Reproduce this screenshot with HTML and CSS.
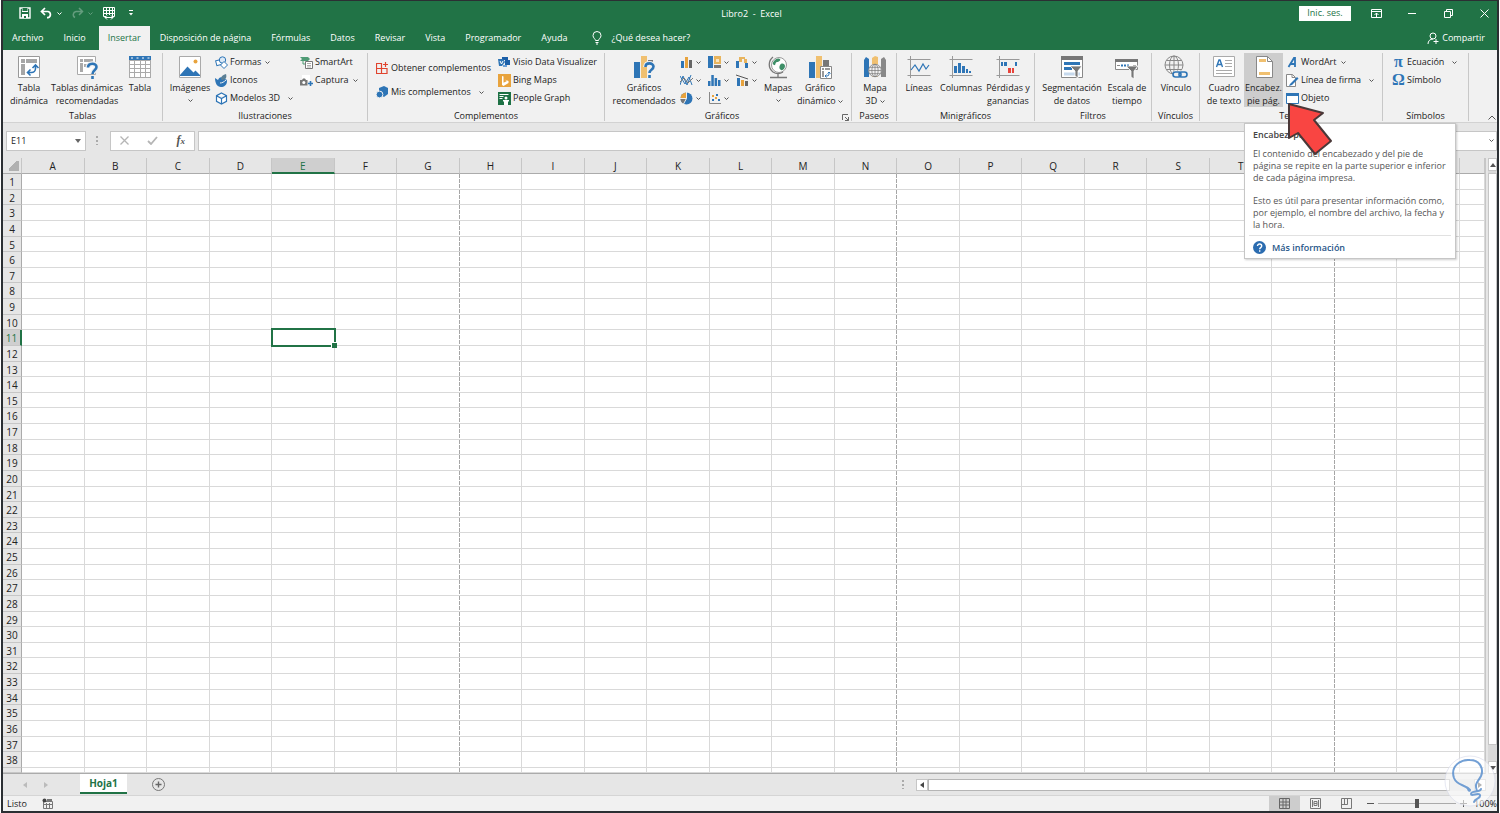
FILE: index.html
```
<!DOCTYPE html>
<html lang="es">
<head>
    <meta charset="UTF-8">
    <meta name="viewport" content="width=device-width, initial-scale=1.0">
    <title>Libro2 - Excel</title>
    <link rel="stylesheet" href="styles.css">
</head>
<body>
    <!-- shared glyphs -->
    <svg class="defs" aria-hidden="true">
        <symbol id="chev" viewBox="0 0 5 5"><path d="M0.5 1.5l2 2 2-2" fill="none" stroke="currentColor"/></symbol>
        <symbol id="globe" viewBox="0 0 20 20"><g fill="none" stroke="currentColor"><circle cx="10" cy="10" r="9"/><ellipse cx="10" cy="10" rx="4.5" ry="9"/><path d="M1 10h18M10 1v18M2.5 5.5h15M2.5 14.5h15"/></g></symbol>
    </svg>

    <div class="window">
        <header class="titlebar">
            <div class="quick">
                <button aria-label="Guardar"><svg width="12" height="12" viewBox="0 0 12 12"><path d="M1 1h10v10H1z" fill="none" stroke="#fff" stroke-width="1.4"/><path d="M3 1h6v4H3zM3 7h6v4H3z" fill="#fff"/><path d="M3.5 1h5v3h-5zM5 9h2v2H5z" fill="#217346"/></svg></button>
                <button class="undo" aria-label="Deshacer"><svg width="13" height="12" viewBox="0 0 13 12"><path d="M5 1L1.5 4.5 5 8M2 4.5h6a3.2 3.2 0 0 1 0 6.2H7" fill="none" stroke="#fff" stroke-width="1.7"/></svg><svg class="chev"><use href="#chev"/></svg></button>
                <button class="redo" aria-label="Rehacer" disabled><svg width="13" height="12" viewBox="0 0 13 12"><path d="M8 1l3.500 3.500L8 8M11 4.500H5a3.200 3.200 0 0 0-1 6" fill="none" stroke="#fff" stroke-width="1.500"/></svg><svg class="chev"><use href="#chev"/></svg></button>
                <button class="touch" aria-label="Ver saltos de página"><svg width="14" height="14" viewBox="0 0 14 14"><path d="M1.500 1.500h11v9h-11zM1 4.500h12M1 7.500h12M4.500 1v10M7.500 1v10M10.500 1v10" fill="none" stroke="#fff"/><path d="M4 9h6v4H4z" fill="#217346"/><path d="M3 11.500h8M5 9.500l-2 2 2 2M9 9.500l2 2-2 2" fill="none" stroke="#fff"/></svg></button>
                <button aria-label="Personalizar"><svg width="6" height="6" viewBox="0 0 6 6"><path d="M1 .5h4" stroke="#fff"/><path d="M1 3h4L3 5.500z" fill="#fff"/></svg></button>
            </div>
            <h1>Libro2&nbsp; -&nbsp; Excel</h1>
            <div class="sys">
                <button class="signin">Inic. ses.</button>
                <button aria-label="Opciones de la cinta"><svg width="11" height="9" viewBox="0 0 11 9"><path d="M.5.5h10v8H.5zM.5 2.500h10M5.500 8V4M3.500 6l2-2 2 2" fill="none" stroke="#fff"/></svg></button>
                <button aria-label="Minimizar"><svg width="8" height="8" viewBox="0 0 8 8"><path d="M0 4.500h8" stroke="#fff"/></svg></button>
                <button aria-label="Restaurar"><svg width="9" height="9" viewBox="0 0 9 9"><path d="M.5 2.500h6v6h-6zM2.500 2V.5h6v6H7" fill="none" stroke="#fff"/></svg></button>
                <button aria-label="Cerrar"><svg width="9" height="9" viewBox="0 0 9 9"><path d="M.5.5l8 8M8.500.5l-8 8" stroke="#fff"/></svg></button>
            </div>
        </header>

        <nav class="tabs">
            <a href="#">Archivo</a>
            <a href="#">Inicio</a>
            <a href="#" class="active">Insertar</a>
            <a href="#">Disposición de página</a>
            <a href="#">Fórmulas</a>
            <a href="#">Datos</a>
            <a href="#">Revisar</a>
            <a href="#">Vista</a>
            <a href="#">Programador</a>
            <a href="#">Ayuda</a>
            <a href="#" class="tell"><svg width="10" height="14" viewBox="0 0 10 14"><path d="M3.500 9.500C3.500 8 1 7 1 4.500a4 4 0 0 1 8 0C9 7 6.500 8 6.500 9.500zM3.500 11.500h3M4 13h2" fill="none" stroke="#fff"/></svg>¿Qué desea hacer?</a>
            <a href="#" class="share"><svg width="12" height="12" viewBox="0 0 12 12"><circle cx="6" cy="4" r="3" fill="none" stroke="#fff"/><path d="M1 12c0-3 2-5 5-5M9 7v5M6.500 9.500h5" fill="none" stroke="#fff"/></svg>Compartir</a>
        </nav>

        <div class="ribbon">
            <section class="group g-tablas">
                <div class="items">
                    <button class="big w46"><svg width="24" height="24" viewBox="0 0 24 24"><path d="M1.500 1.500h21v21h-21z" fill="#fff" stroke="#999"/><path d="M4 4h4v4H4zM9 4h11v4H9zM4 9h4v11H4z" fill="#a6a6a6"/><path d="M11 17.500h3.500a4 4 0 0 0 4-4V11M13.500 14.500l-3 3 3 3M15.500 13l3-3 3 3" fill="none" stroke="#2e75b6" stroke-width="1.600"/></svg><span>Tabla<br>dinámica</span></button>
                    <button class="big w70"><svg width="24" height="24" viewBox="0 0 24 24"><path d="M2.500 1.500h18v18h-18z" fill="#fff" stroke="#aaa"/><path d="M5 4h3v3H5zM9 4h9v3H9zM5 8h3v9H5zM9 9h3v3H9z" fill="#aaa"/><path d="M13 12.500c0-5 8.500-5 8.500-.5 0 3.500-4 3-4 7M17.500 21v3" fill="none" stroke="#f0f0f0" stroke-width="5"/><path d="M13 12.500c0-5 8.500-5 8.500-.5 0 3.500-4 3-4 7M17.500 21v3" fill="none" stroke="#2e75b6" stroke-width="2.600"/></svg><span>Tablas dinámicas<br>recomendadas</span></button>
                    <button class="big w36"><svg width="24" height="24" viewBox="0 0 24 24"><path d="M1 1h22v22H1z" fill="#fff"/><path d="M1 5.500h22M1 9.500h22M1 13.500h22M1 17.500h22M1 22.500h22M1.500 5v18M6.500 5v18M12.500 5v18M17.500 5v18M22.500 5v18" stroke="#aaa" fill="none"/><path d="M1 1h22v4H1z" fill="#2e75b6"/><path d="M3 3h2M8.500 3h2M14 3h2M19.500 3h2" stroke="#fff"/></svg><span>Tabla</span></button>
                </div>
                <h2>Tablas</h2>
            </section>

            <section class="group g-ilus">
                <div class="items">
                    <button class="big w46"><svg width="24" height="24" viewBox="0 0 24 24"><path d="M1.500 1.500h21v21h-21z" fill="#fff" stroke="#aaa"/><circle cx="17.500" cy="6.500" r="2" fill="#e8a33d"/><path d="M2 20l7.500-8.500 6 6 2-2 4.500 4.500v1H2z" fill="#2e75b6"/></svg><span>Imágenes</span><svg class="chev"><use href="#chev"/></svg></button>
                    <div class="stack col85">
                        <button class="small"><svg width="13" height="13" viewBox="0 0 13 13"><path d="M1 4h6v5H1z" fill="#fff" stroke="#2e75b6" transform="rotate(-15 4 6)"/><circle cx="7.500" cy="4" r="3.200" fill="#dbe9f6" stroke="#2e75b6"/><path d="M9 5.500l3.500 3.500L9 12.500 5.500 9z" fill="#fff" stroke="#2e75b6"/></svg>Formas<svg class="chev"><use href="#chev"/></svg></button>
                        <button class="small"><svg width="13" height="13" viewBox="0 0 13 13"><path d="M0 4l3 2c1-3 4-4 5-1 2 0 4 0 4 2 0 4-3 6-6 6-4 0-6-4-6-9z" fill="#2e75b6"/><path d="M6 5C6 2 8 1 11 0c1 3 0 6-4 6z" fill="#5b7f95"/><path d="M5 9c2 0 4-1 6-3" stroke="#f0f0f0" fill="none"/></svg>Iconos</button>
                        <button class="small"><svg width="13" height="13" viewBox="0 0 13 13"><path d="M6.500 1l5 2.700v5.600l-5 2.700-5-2.700V3.700zM6.500 12V6.500M1.500 3.700l5 2.800 5-2.800" fill="#fff" stroke="#2e75b6" stroke-width="1.200"/></svg>Modelos 3D<svg class="chev far"><use href="#chev"/></svg></button>
                    </div>
                    <div class="stack">
                        <button class="small"><svg width="13" height="13" viewBox="0 0 13 13"><path d="M0 1h8l2 2-2 2H0l2-2z" fill="#4f9b75"/><path d="M3 5v3h3" fill="none" stroke="#4f9b75"/><path d="M5.500 5.500h7v7h-7z" fill="#fff" stroke="#777"/><path d="M7 7.500h4M7 9.500h4M7 11h4" stroke="#999" stroke-width=".8"/></svg>SmartArt</button>
                        <button class="small"><svg width="13" height="13" viewBox="0 0 13 13"><path d="M2 1h8v6H2z" fill="#fff"/><path d="M0 6h2l1-1.500h2L6 6h1.500v5.500H0z" fill="#777"/><circle cx="3.800" cy="8.500" r="1.500" fill="#fff"/><path d="M10.500 7v5M8 9.500h5" stroke="#2e75b6" stroke-width="1.600"/></svg>Captura<svg class="chev"><use href="#chev"/></svg></button>
                    </div>
                </div>
                <h2>Ilustraciones</h2>
            </section>

            <section class="group g-comp">
                <div class="items">
                    <div class="stack tall col122">
                        <button class="small"><svg width="13" height="13" viewBox="0 0 13 13"><path d="M.5 1.500h5v5h-5zM.5 6.500h5v5h-5zM5.500 6.500h5.500v5H5.500zM9.500 0v5M7 2.500h5" fill="none" stroke="#e0442e" stroke-width="1.200"/></svg>Obtener complementos</button>
                        <button class="small"><svg width="13" height="13" viewBox="0 0 13 13"><path d="M3 2l5-2 4 2v6l-4 3-5-3z" fill="#2e75b6"/><circle cx="3.500" cy="8.500" r="3.400" fill="#2e75b6" stroke="#f0f0f0"/></svg>Mis complementos<svg class="chev far"><use href="#chev"/></svg></button>
                    </div>
                    <div class="stack">
                        <button class="small"><svg width="13" height="13" viewBox="0 0 13 13"><path d="M4 1h6v3H4zM7 4h5v5H7z" fill="#1b5fa8"/><path d="M0 3h5l2 3-3 4H1z" fill="#2e75b6"/><path d="M5 9h4v2H5z" fill="#6ba0d8"/><path d="M2 5l1.500 3L5 5" fill="none" stroke="#fff"/></svg>Visio Data Visualizer</button>
                        <button class="small"><svg width="13" height="13" viewBox="0 0 13 13"><path d="M0 0h13v13H0z" fill="#e8a33d"/><path d="M4 2l1.500.6v6.200L9 7 6.500 5.500l4 1.500v2L5.500 12 4 11z" fill="#fff"/></svg>Bing Maps</button>
                        <button class="small"><svg width="13" height="13" viewBox="0 0 13 13"><path d="M0 0h13v13H0z" fill="#1e7145"/><path d="M1.500 2.500h9M1.500 4.500h4M1.500 6.500h3" stroke="#fff"/><circle cx="8" cy="6" r="1.500" fill="#fff"/><path d="M5 8h6v1.500h-1V13H6V9.500H5z" fill="#fff"/></svg>People Graph</button>
                    </div>
                </div>
                <h2>Complementos</h2>
            </section>

            <section class="group g-graf">
                <div class="items">
                    <button class="big w70"><svg width="24" height="24" viewBox="0 0 24 24"><path d="M2 7h6v16H2z" fill="#2e75b6"/><path d="M9 1h6v22H9z" fill="#f0c070"/><path d="M16 5h5v6h-5z" fill="#777"/><path d="M13.500 12c0-5 8-4.500 8-.5 0 3.500-4 3-4 6.500M17.500 20v3" fill="none" stroke="#f0f0f0" stroke-width="5"/><path d="M13.500 12c0-5 8-4.500 8-.5 0 3.500-4 3-4 6.500M17.500 20v3" fill="none" stroke="#2e75b6" stroke-width="2.600"/></svg><span>Gráficos<br>recomendados</span></button>
                    <div class="charts">
                        <button class="small" aria-label="Columnas"><svg width="13" height="13" viewBox="0 0 13 13"><path d="M1 5h3v7H1z" fill="#2e75b6"/><path d="M5 1h3v11H5z" fill="#e8a33d"/><path d="M9 4h3v8H9z" fill="#666"/></svg><svg class="chev"><use href="#chev"/></svg></button>
                        <button class="small" aria-label="Jerarquía"><svg width="13" height="13" viewBox="0 0 13 13"><path d="M0 0h5v12H0z" fill="#2e75b6"/><path d="M6 0h7v8H6z" fill="#e8b45d"/><path d="M8 3h3v3H8z" fill="#f8e4c0"/><path d="M6 9h7v3H6z" fill="#777"/></svg><svg class="chev"><use href="#chev"/></svg></button>
                        <button class="small" aria-label="Cascada"><svg width="13" height="13" viewBox="0 0 13 13"><path d="M0 5h3v7H0zM9 7h3v5H9z" fill="#2e75b6"/><path d="M3 1h3v5H3zM6 1h3v2H6zM8 3h3v4H8z" fill="#e8b45d"/></svg><svg class="chev"><use href="#chev"/></svg></button>
                        <button class="small" aria-label="Líneas"><svg width="13" height="13" viewBox="0 0 13 13"><path d="M0 11l3-9 4 9 4-10M0 2l5 8 4-7 3 8" fill="none" stroke="#2e75b6"/><path d="M0 8l4-4 4 5 5-5" fill="none" stroke="#777"/></svg><svg class="chev"><use href="#chev"/></svg></button>
                        <button class="small" aria-label="Estadística"><svg width="13" height="13" viewBox="0 0 13 13"><path d="M0 7h2.500v5H0zM3.300 1h2.500v11H3.300zM6.600 4h2.500v8H6.600zM10 6h2.500v6H10z" fill="#2e75b6"/></svg><svg class="chev"><use href="#chev"/></svg></button>
                        <button class="small" aria-label="Combinado"><svg width="13" height="13" viewBox="0 0 13 13"><path d="M1 4h3v8H1z" fill="#2e75b6"/><path d="M5 6h3v6H5z" fill="#e8a33d"/><path d="M9 7h3v5H9z" fill="#666"/><path d="M0 1l6 2 6 2" fill="none" stroke="#555"/></svg><svg class="chev"><use href="#chev"/></svg></button>
                        <button class="small" aria-label="Circular"><svg width="13" height="13" viewBox="0 0 13 13"><circle cx="6.500" cy="6.500" r="6" fill="#2e75b6"/><path d="M6.500 6.500V.5a6 6 0 0 0-6 6z" fill="#e8a33d"/><path d="M6.500 6.500h-6a6 6 0 0 0 3 5.200z" fill="#777"/><path d="M6.500 0v6.500H0M6.500 6.500L3.500 12" stroke="#f0f0f0" fill="none"/></svg><svg class="chev"><use href="#chev"/></svg></button>
                        <button class="small" aria-label="Dispersión"><svg width="13" height="13" viewBox="0 0 13 13"><path d="M1.500 0v11.500H13" fill="none" stroke="#888"/><path d="M4 7h2v2H4zM8 2h2v2H8zM10 7h2v2h-2z" fill="#2e75b6"/><path d="M4 3h2v2H4zM7 5h2v2H7z" fill="#e8a33d"/></svg><svg class="chev"><use href="#chev"/></svg></button>
                    </div>
                    <button class="big w36"><svg width="24" height="24" viewBox="0 0 24 24"><circle cx="13" cy="10" r="7.500" fill="#fff" stroke="#999"/><path d="M8 6c2-3 5-3 6-2s-1 3-3 3-1 4-3 3-1-3 0-4zM14 10c2-3 5-1 5 1s-2 5-4 4-2-3-1-5z" fill="#3f8f68"/><path d="M7 2c-5 4-5 11 0 15 3 2 7 2 10 0M12 18.500V22M4 22.500h17" fill="none" stroke="#777" stroke-width="1.300"/></svg><span>Mapas</span><svg class="chev"><use href="#chev"/></svg></button>
                    <button class="big w48"><svg width="24" height="24" viewBox="0 0 24 24"><path d="M1 7h6v16H1z" fill="#2e75b6"/><path d="M8 1h6v22H8z" fill="#f0c070"/><path d="M15 5h6v8h-6z" fill="#777"/><path d="M12.500 11.500h11v12h-11z" fill="#fff" stroke="#888"/><path d="M14 13h2v2h-2zM17 13h5v2h-5zM14 16h2v6h-2z" fill="#999"/><path d="M17 21h2a2 2 0 0 0 2-2v-2M18.500 19.500L17 21l1.500 1.500M19.500 18.500L21 17l1.500 1.500" fill="none" stroke="#2e75b6"/></svg><span>Gráfico<br>dinámico <svg class="chev"><use href="#chev"/></svg></span></button>
                </div>
                <h2>Gráficos</h2>
                <button class="launcher" aria-label="Ver todos los gráficos"><svg width="7" height="7" viewBox="0 0 7 7"><path d="M.5 6V.5H6M3 3l3.500 3.500M6.500 3v3.500H3" fill="none" stroke="#666"/></svg></button>
            </section>

            <section class="group g-paseos">
                <div class="items">
                    <button class="big w36"><svg width="24" height="24" viewBox="0 0 24 24"><path d="M1 5l2-3 3 2v18H1z" fill="#2e75b6"/><path d="M9 3l3-2 3 1v20H9z" fill="#f0c070"/><path d="M18 4l3-2 2 3v17h-5z" fill="#888"/><circle cx="12" cy="15.500" r="6.500" fill="#f0f0f0"/><use href="#globe" x="5" y="8.500" width="14" height="14" color="#777"/></svg><span>Mapa<br>3D <svg class="chev"><use href="#chev"/></svg></span></button>
                </div>
                <h2>Paseos</h2>
            </section>

            <section class="group g-mini">
                <div class="items">
                    <button class="big w36"><svg width="24" height="24" viewBox="0 0 24 24"><path d="M.5 4.500h23M.5 20.500h23M3.500 1v22" stroke="#999" fill="none"/><path d="M4 15l4-5 4 6 4-7 3 5 3-4" fill="none" stroke="#2e75b6" stroke-width="1.200"/></svg><span>Líneas</span></button>
                    <button class="big w48"><svg width="24" height="24" viewBox="0 0 24 24"><path d="M.5 4.500h23M.5 20.500h23M3.500 1v22" stroke="#999" fill="none"/><path d="M5 11h3v7H5zM9 8h3v10H9zM13 11h3v7h-3zM17 14h2v4h-2zM20 16h2v2h-2z" fill="#2e75b6"/></svg><span>Columnas</span></button>
                    <button class="big w46"><svg width="24" height="24" viewBox="0 0 24 24"><path d="M.5 4.500h23M.5 20.500h23M3.500 1v22" stroke="#999" fill="none"/><path d="M5 7h2v4H5zM8 7h3v4H8zM19 7h2v4h-2z" fill="#2e75b6"/><path d="M12 13h3v5h-3zM16 13h2v5h-2z" fill="#e8443c"/></svg><span>Pérdidas y<br>ganancias</span></button>
                </div>
                <h2>Minigráficos</h2>
            </section>

            <section class="group g-filtros">
                <div class="items">
                    <button class="big w64"><svg width="24" height="24" viewBox="0 0 24 24"><path d="M1.500 1.500h21v21h-21z" fill="#fff" stroke="#888"/><path d="M1 1h22v4H1z" fill="#777"/><path d="M4 7h16v3H4zM4 12h8v3H4z" fill="#2e75b6"/><path d="M4 17.500h16v3H4z" fill="#c5d8ec"/><path d="M10 11h12l-4 5v7l-3-2v-5z" fill="#777" stroke="#fff" stroke-width=".8"/></svg><span>Segmentación<br>de datos</span></button>
                    <button class="big w46"><svg width="24" height="24" viewBox="0 0 24 24"><path d="M.5 4.500h22v10H.5z" fill="#fff" stroke="#888"/><path d="M0 4h23v3H0z" fill="#777"/><path d="M2 10.500h3M18 10.500h3" stroke="#888"/><path d="M6 10.500h9" stroke="#2e75b6" stroke-width="2" stroke-dasharray="2 1"/><path d="M11 11h12l-4 5v8l-3-2v-6z" fill="#777" stroke="#fff" stroke-width=".8"/></svg><span>Escala de<br>tiempo</span></button>
                </div>
                <h2>Filtros</h2>
            </section>

            <section class="group g-vinc">
                <div class="items">
                    <button class="big w46"><svg width="24" height="24" viewBox="0 0 24 24"><use href="#globe" x="0" y="0" width="20" height="20" color="#888"/><g fill="none"><path d="M10 19.500h14" stroke="#f0f0f0" stroke-width="8"/><rect x="9" y="17" width="8" height="5" rx="2.500" stroke="#2e75b6" stroke-width="1.600"/><rect x="15" y="17" width="8" height="5" rx="2.500" stroke="#2e75b6" stroke-width="1.600"/></g></svg><span>Vínculo</span></button>
                </div>
                <h2>Vínculos</h2>
            </section>

            <section class="group g-texto">
                <div class="items">
                    <button class="big w36"><svg width="24" height="24" viewBox="0 0 24 24"><path d="M1.500 1.500h21v20h-21z" fill="#fff" stroke="#aaa"/><path d="M4.500 12L7 5h1l2.500 7M5.500 9.500h4" fill="none" stroke="#2e75b6" stroke-width="1.400"/><path d="M13 5.500h7M13 8.500h7M13 11.500h7M4 15.500h16M4 18.500h16" stroke="#aaa"/></svg><span>Cuadro<br>de texto</span></button>
                    <div class="pick">
                        <button class="big pressed"><svg width="24" height="24" viewBox="0 0 24 24"><path d="M4.500 1.500h11l5 5v16h-16z" fill="#fff" stroke="#888"/><path d="M15.500 1.500v5h5" fill="none" stroke="#888"/><path d="M7 4h7v3H7zM7 17h11v3H7z" fill="#f0c070"/></svg><span>Encabez.<br>pie pág.</span></button>
                        <aside class="tip" role="tooltip">
                            <h3>Encabez. pie pág.</h3>
                            <p>El contenido del encabezado y del pie de<br>página se repite en la parte superior e inferior<br>de cada página impresa.</p>
                            <p>Esto es útil para presentar información como,<br>por ejemplo, el nombre del archivo, la fecha y<br>la hora.</p>
                            <a href="#"><svg width="13" height="13" viewBox="0 0 13 13"><circle cx="6.500" cy="6.500" r="6.500" fill="#2b6cb0"/><path d="M4.500 5c0-2.800 4.200-2.500 4.200 0 0 1.600-2 1.600-2 3.200M6.700 9.200v1.500" fill="none" stroke="#fff" stroke-width="1.400"/></svg>Más información</a>
                        </aside>
                        <svg class="arrow" width="46" height="54" viewBox="0 0 46 54"><path d="M2 2l34 9-9 7 17 21-16 13-17-21-9 5z" fill="#f94542" stroke="#4a3838" stroke-width="2" stroke-linejoin="round"/></svg>
                    </div>
                    <div class="stack">
                        <button class="small"><svg width="13" height="13" viewBox="0 0 13 13"><path d="M2.500 11L8 2h1v9M4.500 8h4" fill="none" stroke="#2e75b6" stroke-width="1.800"/></svg>WordArt<svg class="chev"><use href="#chev"/></svg></button>
                        <button class="small"><svg width="13" height="13" viewBox="0 0 13 13"><path d="M.5.500h6l3 3v9h-9z" fill="#fff" stroke="#888"/><path d="M6 .5v3h3" fill="none" stroke="#888"/><path d="M4 10l7-7 1.500 1.500L6 11l-3 1z" fill="#2e75b6"/></svg>Línea de firma<svg class="chev far"><use href="#chev"/></svg></button>
                        <button class="small"><svg width="13" height="13" viewBox="0 0 13 13"><path d="M.5 1.500h12v10H.5z" fill="#fff" stroke="#2e75b6"/><path d="M0 1h13v3H0z" fill="#2e75b6"/></svg>Objeto</button>
                    </div>
                </div>
                <h2>Texto</h2>
            </section>

            <section class="group g-simb">
                <div class="items">
                    <div class="stack">
                        <button class="small"><span class="sym">π</span>Ecuación<svg class="chev far"><use href="#chev"/></svg></button>
                        <button class="small"><span class="sym">Ω</span>Símbolo</button>
                    </div>
                </div>
                <h2>Símbolos</h2>
            </section>
            <button class="collapse" aria-label="Contraer la cinta"><svg width="8" height="5" viewBox="0 0 8 5"><path d="M.5 4.500L4 1l3.500 3.500" fill="none" stroke="#555"/></svg></button>
        </div>

        <div class="formula">
            <div class="namebox"><input type="text" value="E11" aria-label="Cuadro de nombres"><button aria-label="Nombres"><svg width="6" height="4" viewBox="0 0 6 4"><path d="M0 0h6L3 4z" fill="#666"/></svg></button></div>
            <i class="grip"></i>
            <div class="fx">
                <button aria-label="Cancelar"><svg width="9" height="9" viewBox="0 0 9 9"><path d="M.5.500l8 8M8.500.500l-8 8" stroke="#b5b5b5" stroke-width="1.300"/></svg></button>
                <button aria-label="Introducir"><svg width="11" height="9" viewBox="0 0 11 9"><path d="M1 5l3 3 6-7" fill="none" stroke="#b5b5b5" stroke-width="1.800"/></svg></button>
                <button aria-label="Insertar función"><em>f<small>x</small></em></button>
            </div>
            <div class="bar"><input type="text" aria-label="Barra de fórmulas"><button aria-label="Expandir"><svg class="chev"><use href="#chev"/></svg></button></div>
        </div>

        <main class="sheet">
            <table class="cells">
                <thead id="head"></thead>
                <tbody id="body"></tbody>
            </table>
            <div class="vscroll">
                <button aria-label="Arriba"><svg width="6" height="4" viewBox="0 0 6 4"><path d="M0 4h6L3 0z" fill="#555"/></svg></button>
                <div class="vthumb"></div>
                <button aria-label="Abajo"><svg width="6" height="4" viewBox="0 0 6 4"><path d="M0 0h6L3 4z" fill="#555"/></svg></button>
            </div>
        </main>

        <div class="sheettabs">
            <div class="navs">
                <button aria-label="Hoja anterior"><svg width="4" height="6" viewBox="0 0 4 6"><path d="M4 0v6L0 3z" fill="#bbb"/></svg></button>
                <button aria-label="Hoja siguiente"><svg width="4" height="6" viewBox="0 0 4 6"><path d="M0 0v6l4-3z" fill="#bbb"/></svg></button>
            </div>
            <a href="#" class="sheettab">Hoja1</a>
            <button class="add" aria-label="Hoja nueva"><svg width="13" height="13" viewBox="0 0 13 13"><circle cx="6.500" cy="6.500" r="6" fill="none" stroke="#777"/><path d="M6.500 3.500v6M3.500 6.500h6" stroke="#666" stroke-width="1.400"/></svg></button>
            <div class="hwrap">
                <i class="grip"></i>
                <div class="hscroll">
                    <button aria-label="Izquierda"><svg width="4" height="6" viewBox="0 0 4 6"><path d="M4 0v6L0 3z" fill="#444"/></svg></button>
                    <div class="hthumb"></div>
                    <button aria-label="Derecha"><svg width="4" height="6" viewBox="0 0 4 6"><path d="M0 0v6l4-3z" fill="#444"/></svg></button>
                </div>
            </div>
        </div>

        <footer class="status">
            <span>Listo</span>
            <button class="macro" aria-label="Grabar macro"><svg width="11" height="11" viewBox="0 0 11 11"><path d="M1.500 3.500h9v7h-9zM4.500 5v5M7.500 5v5M1 6.500h9" fill="none" stroke="#777"/><path d="M5 1h5v2H5z" fill="#777"/><circle cx="2.500" cy="2.500" r="2" fill="#444"/></svg></button>
            <div class="views">
                <button class="on" aria-label="Normal"><svg width="11" height="11" viewBox="0 0 11 11"><path d="M.5.500h10v10H.5zM4 0v11M7 0v11M0 4h11M0 7h11" fill="none" stroke="#666"/></svg></button>
                <button aria-label="Diseño de página"><svg width="11" height="11" viewBox="0 0 11 11"><path d="M.5.500h10v10H.5zM2.500 2v7M8.500 2v7M4 3.500h3v4H4zM4 5.500h3" fill="none" stroke="#777"/></svg></button>
                <button aria-label="Saltos de página"><svg width="11" height="11" viewBox="0 0 11 11"><path d="M.5.500h10v10H.5zM.5 6.500h6V.5M3.500 1v5" fill="none" stroke="#777"/></svg></button>
            </div>
            <div class="zoom">
                <button aria-label="Alejar"><svg width="7" height="7" viewBox="0 0 7 7"><path d="M0 3.500h7" stroke="#555"/></svg></button>
                <input type="range" min="0" max="100" value="50" aria-label="Zoom">
                <button aria-label="Acercar"><svg width="7" height="7" viewBox="0 0 7 7"><path d="M0 3.500h7M3.500 0v7" stroke="#555"/></svg></button>
                <span>100%</span>
            </div>
        </footer>

        <svg class="mark" width="52" height="52" viewBox="0 0 52 52"><circle cx="26" cy="26" r="25" fill="#fff" fill-opacity=".6" stroke="#d5d9ea" stroke-opacity=".6"/><path d="M26 35C21 29 13 31 10 23 6 11 17 4 26 5c10 0 14 9 11 16-3 6-7 7-4 15M26 35c0 2-2 0-2-1M37 34c-1 4-10 1-10 5 0 3 8-2 9 1 1 4-5 3-6 7" fill="none" stroke="#5b8fce" stroke-opacity=".85" stroke-width="2" stroke-linecap="round"/></svg>
    </div>

    <script>
        const cols = 24, rows = 39;
        const breaks = [7, 14, 21];
        let head = '<tr><th class="corner"></th>';
        for (let c = 1; c <= cols; c++) {
            const cls = c === 5 ? ' class="sel"' : '';
            head += `<th${cls}>${c < cols ? String.fromCharCode(64 + c) : ''}</th>`;
        }
        document.getElementById('head').innerHTML = head + '</tr>';

        let body = '';
        for (let r = 1; r <= rows; r++) {
            body += `<tr><th${r === 11 ? ' class="sel"' : ''}>${r}</th>`;
            for (let c = 1; c <= cols; c++) {
                let cls = '';
                if (breaks.includes(c)) cls = ' class="break"';
                if (r === 11 && c === 5) cls = ' class="current"';
                body += `<td${cls}></td>`;
            }
            body += '</tr>';
        }
        document.getElementById('body').innerHTML = body;
    </script>
</body>
</html>
```
FILE: styles.css
```
* {
    margin: 0;
    padding: 0;
    box-sizing: border-box;
}

body {
    font-family: "Open Sans", "Noto Sans", sans-serif;
    font-size: 9px;
    color: #222;
    background: #fff;
    padding: 0 1px;
}

button, input {
    font: inherit;
    color: inherit;
    background: none;
    border: 0;
}

a {
    color: inherit;
    text-decoration: none;
}

svg {
    display: block;
    flex: none;
}

.defs {
    position: absolute;
    width: 0;
    height: 0;
}

.chev {
    width: 5px;
    height: 5px;
    color: #555;
}

.window {
    position: relative;
    height: 100vh;
    display: flex;
    flex-direction: column;
    border: 2px solid #2b2f33;
    border-top-width: 1px;
    overflow: hidden;
}

/* title bar */
.titlebar {
    display: grid;
    grid-template-columns: 1fr auto 1fr;
    align-items: center;
    height: 25px;
    padding-bottom: 1px;
    background: #217346;
    color: #fff;
}

.titlebar .chev {
    color: #fff;
}

.titlebar h1 {
    padding-left: 3px;
    font-size: 9px;
    font-weight: 400;
}

.quick {
    display: flex;
    align-items: center;
    gap: 9px;
    padding-left: 16px;
}

.quick button {
    display: flex;
    align-items: center;
    gap: 4px;
}

.redo {
    opacity: 0.3;
}

.quick .touch {
    margin-right: 3px;
}

.sys {
    display: flex;
    align-items: center;
    justify-content: flex-end;
    padding-right: 8px;
}

.sys button {
    width: 36px;
    display: flex;
    justify-content: center;
}

.sys button:last-child {
    justify-content: flex-end;
    width: 23px;
}

.sys .signin {
    width: 52px;
    height: 15px;
    line-height: 14px;
    margin-right: 7px;
    background: #fff;
    color: #217346;
}

/* ribbon tabs */
.tabs {
    display: flex;
    height: 24px;
    line-height: 24px;
    background: #217346;
    color: #fff;
}

.tabs a {
    padding: 0 10px;
}

.tabs a:first-child {
    padding-left: 9px;
}

.tabs .active {
    margin-left: 3px;
    padding: 0 9px;
    background: #f1f1f1;
    color: #217346;
}

.tabs .tell, .tabs .share {
    display: flex;
    align-items: center;
    gap: 10px;
}

.tabs .tell {
    padding-left: 14px;
}

.tabs .share {
    margin-left: auto;
    gap: 3px;
    padding-right: 12px;
}

/* ribbon */
.ribbon {
    position: relative;
    display: flex;
    height: 73px;
    padding: 3px 0 1px;
    background: #f1f1f1;
    border-bottom: 1px solid #d2d2d2;
}

.group {
    position: relative;
    display: flex;
    flex-direction: column;
    flex: none;
    border-right: 1px solid #c8c8c8;
}

.group h2 {
    margin-top: auto;
    font-size: 9px;
    line-height: 11px;
    font-weight: 400;
    text-align: center;
}

.items {
    display: flex;
    padding-left: 3px;
    height: 54px;
}

.g-tablas { width: 160px; }
.g-ilus { width: 205px; }
.g-comp { width: 237px; }
.g-graf { width: 247px; }
.g-paseos { width: 45px; }
.g-mini { width: 138px; }
.g-filtros { width: 117px; }
.g-vinc { width: 48px; }
.g-texto { width: 183px; }
.g-simb { width: 86px; }

.big {
    display: flex;
    flex-direction: column;
    align-items: center;
    padding-top: 2px;
    height: 54px;
    line-height: 13px;
    white-space: nowrap;
}

.big > span {
    margin-top: 2px;
}

.big > .chev {
    margin-top: 4px;
}

.big span .chev {
    display: inline-block;
    vertical-align: middle;
}

.w36 { width: 36px; }
.w46 { width: 46px; }
.w48 { width: 48px; }
.w64 { width: 64px; }
.w70 { width: 70px; }

.small {
    display: flex;
    align-items: center;
    gap: 2px;
    height: 18px;
    line-height: 18px;
    white-space: nowrap;
}

.stack .chev {
    margin-left: 2px;
}

.stack .far {
    margin-left: 6px;
}

.col85 { width: 85px; }
.col122 { width: 122px; }

.g-ilus .items {
    padding-left: 4px;
}

.g-ilus .col85 {
    margin-left: 2px;
}

.tall {
    padding-top: 3px;
}

.tall .small {
    height: 24px;
}

.g-comp .items {
    padding-left: 8px;
}

.g-graf .items {
    padding-left: 4px;
}

.g-graf h2 {
    padding-right: 12px;
}

.charts {
    display: grid;
    grid-template-columns: 28px 28px 24px;
    grid-template-rows: repeat(3, 18px);
    margin-left: 1px;
}

.charts .small {
    gap: 3px;
}

.g-paseos .items,
.g-filtros .items {
    padding-left: 5px;
}

.g-mini .items {
    padding-left: 4px;
}

.g-vinc .items {
    padding-left: 1px;
}

.launcher {
    position: absolute;
    right: 2px;
    bottom: 0;
}

.g-texto .items {
    padding-left: 6px;
}

.pick {
    position: relative;
    margin: 0 3px 0 2px;
}

.pressed {
    width: 39px;
    background: #cdcdcd;
}

.sym {
    width: 13px;
    font: bold 16px/16px "Liberation Serif", serif;
    color: #2e75b6;
}

.g-simb .items {
    padding-left: 9px;
}

.collapse {
    position: absolute;
    right: 1px;
    bottom: 2px;
}

/* tooltip of the pressed button */
.tip {
    position: absolute;
    z-index: 5;
    top: 70px;
    left: 0;
    width: 212px;
    padding: 5px 4px 4px 8px;
    background: #fff;
    border: 1px solid #c6c6c6;
    box-shadow: 1px 1px 2px rgba(0, 0, 0, 0.2);
    line-height: 12px;
    color: #555;
    white-space: nowrap;
}

.tip h3 {
    font-size: 9px;
    font-weight: 600;
    color: #444;
    margin-bottom: 7px;
}

.tip p {
    margin-bottom: 11px;
}

.tip a {
    display: flex;
    align-items: center;
    gap: 6px;
    margin: -7px 0 0 -4px;
    padding: 5px 0 0 4px;
    border-top: 1px solid #e1e1e1;
    font-weight: 600;
    color: #1f5688;
}

.arrow {
    position: absolute;
    z-index: 6;
    top: 49px;
    left: 43px;
}

/* formula bar */
.formula {
    display: flex;
    align-items: center;
    height: 35px;
    padding-left: 3px;
    background: #e6e6e6;
}

.namebox, .fx, .bar {
    display: flex;
    align-items: center;
    height: 20px;
    background: #fff;
    border: 1px solid #c6c6c6;
}

.namebox {
    width: 80px;
    padding: 0 4px;
}

.namebox input {
    flex: 1;
    min-width: 0;
}

.grip {
    width: 2px;
    height: 9px;
    margin: 0 12px 0 10px;
    background: repeating-linear-gradient(#aaa 0 2px, transparent 2px 4px);
}

.fx {
    width: 85px;
    justify-content: space-around;
}

.fx em {
    font: italic bold 12px "Liberation Serif", serif;
    color: #555;
}

.fx small {
    font-size: 9px;
}

.bar {
    flex: 1;
    margin-left: 3px;
    padding-right: 2px;
}

.bar input {
    flex: 1;
}

/* grid */
.sheet {
    flex: 1;
    min-height: 0;
    display: flex;
    background: #e6e6e6;
}

.cells {
    flex: 1;
    display: grid;
    grid-template-columns: 19px repeat(23, minmax(0, 5fr)) minmax(0, 2fr);
    grid-template-rows: 16px repeat(38, minmax(0, 3fr)) minmax(0, 1fr);
    overflow: hidden;
    border-right: 1px solid #c6c6c6;
    border-bottom: 1px solid #ababab;
}

.cells thead, .cells tbody, .cells tr {
    display: contents;
}

.cells th {
    background: #e6e6e6;
    border-right: 1px solid #c6c6c6;
    border-bottom: 1px solid #c6c6c6;
    font-size: 10px;
    font-weight: 400;
    line-height: 16px;
    text-align: center;
    overflow: hidden;
}

.cells thead th {
    border-bottom-color: #ababab;
}

.cells tbody th {
    border-right-color: #ababab;
}

.cells .corner {
    background: linear-gradient(135deg, #e6e6e6 50%, #b1b1b1 50%);
    background-clip: content-box;
    padding: 3px 2px 2px 6px;
}

.cells th.sel {
    background: #cfcfcf;
    color: #217346;
}

.cells thead .sel {
    border-bottom: 2px solid #217346;
}

.cells tbody .sel {
    border-right: 2px solid #217346;
}

.cells td {
    background: #fff;
    border-right: 1px solid #d9d9d9;
    border-bottom: 1px solid #d9d9d9;
}

.cells .break {
    border-right: 0;
    background: repeating-linear-gradient(#a6a6a6 0 4px, #fff 4px 5px) right / 1px 100% no-repeat #fff;
}

.cells .current {
    position: relative;
}

.current::before {
    content: "";
    position: absolute;
    inset: -2px -2px -2px -1px;
    border: 2px solid #217346;
}

.current::after {
    content: "";
    position: absolute;
    right: -3px;
    bottom: -3px;
    width: 5px;
    height: 5px;
    background: #217346;
    border: solid #fff;
    border-width: 1px 0 0 1px;
}

.vscroll {
    width: 9px;
    margin-left: 2px;
    display: flex;
    flex-direction: column;
    background: #d9d9d9;
}

.vscroll button {
    height: 13px;
    display: flex;
    align-items: center;
    justify-content: center;
    background: #fff;
    border: 1px solid #c6c6c6;
}

.vthumb {
    flex: 1;
    margin: 2px 0 16px;
    background: #fff;
    border: 1px solid #c6c6c6;
}

/* sheet tabs */
.sheettabs {
    display: flex;
    align-items: center;
    height: 22px;
    background: #e6e6e6;
    border-bottom: 1px solid #d5d5d5;
}

.navs {
    display: flex;
    gap: 17px;
    width: 77px;
    padding-left: 20px;
}

.sheettab {
    width: 47px;
    height: 20px;
    align-self: flex-start;
    line-height: 19px;
    text-align: center;
    font-size: 10px;
    font-weight: 700;
    color: #217346;
    background: #fff;
    border-bottom: 2px solid #217346;
}

.add {
    margin-left: 25px;
}

.hwrap {
    display: flex;
    align-items: center;
    width: calc(40% + 7px);
    margin-left: auto;
    padding-right: 11px;
}

.hscroll {
    flex: 1;
    display: flex;
    height: 12px;
    background: #dcdcdc;
}

.hscroll button {
    width: 12px;
    display: flex;
    align-items: center;
    justify-content: center;
    background: #fff;
    border: 1px solid #c6c6c6;
}

.hthumb {
    flex: 1;
    margin-right: 24px;
    background: #fff;
    border: 1px solid #b5b5b5;
}

/* status bar */
.status {
    display: flex;
    align-items: center;
    height: 15px;
    padding-left: 4px;
    background: #f1f1f1;
}

.macro {
    margin-left: 15px;
}

.views {
    display: flex;
    margin-left: auto;
}

.views button {
    width: 31px;
    height: 15px;
    display: flex;
    align-items: center;
    justify-content: center;
}

.views .on {
    background: #cdcdcd;
}

.zoom {
    display: flex;
    align-items: center;
    gap: 4px;
    margin-left: 5px;
}

.zoom input {
    appearance: none;
    width: 78px;
    height: 10px;
    background: linear-gradient(#aaa, #aaa) center / 100% 1px no-repeat;
}

.zoom input::-webkit-slider-thumb {
    appearance: none;
    width: 4px;
    height: 9px;
    background: #555;
}

.zoom span {
    margin-left: 3px;
}

/* round badge over the corner */
.mark {
    position: absolute;
    right: 1px;
    bottom: 4px;
}
```
